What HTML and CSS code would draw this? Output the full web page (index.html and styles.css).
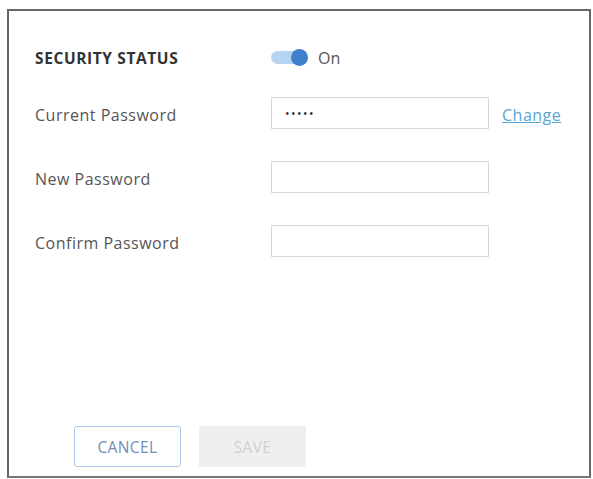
FILE: index.html
```html
<!DOCTYPE html>
<html>
<head>
<meta charset="utf-8">
<link rel="stylesheet" href="styles.css">
</head>
<body>
<div class="frame">
  <div class="form">
    <div class="row row-status">
      <div class="label label-bold">SECURITY STATUS</div>
      <div class="toggle-wrap">
        <span class="toggle"><span class="knob"></span></span>
        <span class="on">On</span>
      </div>
    </div>
    <div class="row">
      <div class="label">Current Password</div>
      <div class="field"><span class="dots">•••••</span></div>
      <a class="change" href="#">Change</a>
    </div>
    <div class="row">
      <div class="label">New Password</div>
      <div class="field"></div>
    </div>
    <div class="row">
      <div class="label">Confirm Password</div>
      <div class="field"></div>
    </div>
  </div>
  <div class="footer">
    <button class="btn btn-cancel">CANCEL</button>
    <button class="btn btn-save">SAVE</button>
  </div>
</div>
</body>
</html>
```
FILE: styles.css
```css
* { box-sizing: border-box; }
html, body { margin: 0; padding: 0; background: #fff; }
body { font-family: "Open Sans", "Noto Sans", sans-serif; color: #4a4a4a; }
.frame {
  margin: 9px 0 0 7px;
  width: 584px;
  height: 469px;
  border: 2px solid #666;
  border-bottom-color: #777;
  display: flex;
  flex-direction: column;
  padding: 34px 0 9px 26px;
}
.form { display: flex; flex-direction: column; }
.row { display: flex; align-items: center; height: 32px; margin-top: 32px; }
.row-status { height: 24px; margin-top: 0; }
.row-status + .row { margin-top: 28px; }
.label { width: 236px; font-size: 16px; letter-spacing: 0.5px; color: #555; padding-top: 3px; }
.label-bold { font-weight: 700; font-size: 15.5px; color: #333; letter-spacing: 0.6px; padding-top: 2px; }
.toggle-wrap { display: flex; align-items: center; }
.toggle {
  position: relative;
  display: inline-block;
  width: 30px;
  height: 13px;
  border-radius: 7px;
  background: #b5d4ef;
}
.knob {
  position: absolute;
  right: -7px;
  top: -2px;
  width: 17px;
  height: 17px;
  border-radius: 50%;
  background: #3f7fcc;
}
.on { margin-left: 17px; font-size: 16px; color: #555; padding-top: 1px; }
.field {
  width: 218px;
  height: 32px;
  border: 1px solid #d6d6d6;
  display: flex;
  align-items: center;
  padding-left: 13px;
}
.dots { font-size: 12px; letter-spacing: 1.5px; color: #333; }
.change { margin-left: 13px; font-size: 16px; letter-spacing: 0.5px; color: #5aa4d6; text-decoration: underline; padding-top: 3px; }
.footer { margin-top: auto; display: flex; gap: 18px; padding-left: 39px; }
.btn {
  width: 107px;
  height: 41px;
  font-family: "Open Sans", "Noto Sans", sans-serif;
  font-size: 15.5px;
  letter-spacing: 0.4px;
  border-radius: 3px;
}
.btn-cancel { background: #fff; border: 1px solid #a9c9e6; color: #6f8fb8; }
.btn-save { background: #efefef; border: none; color: #cfcfcf; border-radius: 0; }
```
